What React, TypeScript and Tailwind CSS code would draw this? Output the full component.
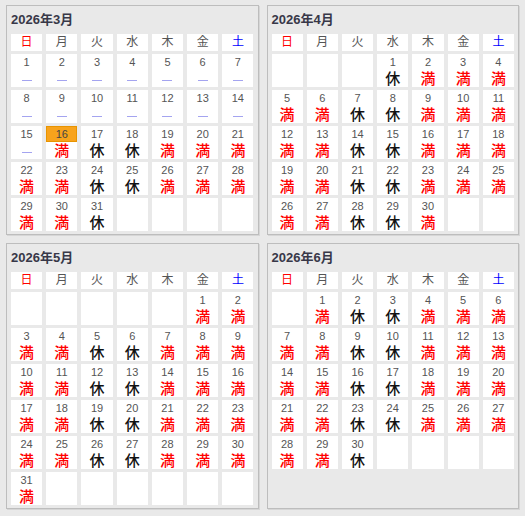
import React from 'react';

const WEEK = ['日', '月', '火', '水', '木', '金', '土'];
const MONTHS = [
  { year: 2026, month: 3 },
  { year: 2026, month: 4 },
  { year: 2026, month: 5 },
  { year: 2026, month: 6 },
];
const TODAY = { month: 3, day: 16 };

type Status = 'past' | 'full' | 'closed';

function getStatus(month: number, day: number, dow: number): Status {
  if (month < TODAY.month || (month === TODAY.month && day < TODAY.day)) return 'past';
  // 火・水は定休日
  if (dow === 2 || dow === 3) return 'closed';
  return 'full';
}

function weekClass(i: number) {
  if (i === 0) return 'text-[#ff0000]';
  if (i === 6) return 'text-[#0000ff]';
  return 'text-[#555555]';
}

function DayCell({ month, day, dow }: { month: number; day: number; dow: number }) {
  const status = getStatus(month, day, dow);
  const isToday = month === TODAY.month && day === TODAY.day;
  return (
    <div className="flex h-[33px] flex-col bg-white text-center">
      <div
        className={
          isToday
            ? 'h-[16px] border border-[#e89400] bg-[#f8a31c] text-[11px] leading-[14px] text-[#444]'
            : 'h-[16px] pt-[1px] text-[11px] leading-[15px] text-[#555]'
        }
      >
        {day}
      </div>
      <div className="flex h-[17px] items-center justify-center">
        {status === 'past' && <span className="mt-[4px] block h-[1px] w-[10px] bg-[#a4a4f0]" />}
        {status === 'full' && <span className="text-[15px] font-medium leading-[17px] text-[#ff0000]">満</span>}
        {status === 'closed' && <span className="text-[15px] font-medium leading-[17px] text-[#111]">休</span>}
      </div>
    </div>
  );
}

function MonthPanel({ year, month }: { year: number; month: number }) {
  const first = new Date(year, month - 1, 1).getDay();
  const days = new Date(year, month, 0).getDate();
  const total = Math.ceil((first + days) / 7) * 7;
  const cells = [];
  for (let i = 0; i < total; i++) {
    const day = i - first + 1;
    if (day < 1 || day > days) {
      cells.push(<div key={i} className="h-[33px] bg-white" />);
    } else {
      cells.push(<DayCell key={i} month={month} day={day} dow={i % 7} />);
    }
  }

  return (
    <div className="border border-[#bdbdbd] bg-[#e9e9e9] px-[4px] pb-[3px] shadow-[1px_1px_0_#d6d6d6]">
      <div className="pt-[5px] pb-[6px] text-[13px] font-bold leading-[17px] text-[#383848]">
        {year}年{month}月
      </div>
      <div className="grid grid-cols-7 gap-x-[4px] gap-y-[3px]">
        {WEEK.map((w, i) => (
          <div key={w} className={`h-[17px] bg-white text-center text-[12px] leading-[17px] ${weekClass(i)}`}>
            {w}
          </div>
        ))}
        {cells}
      </div>
    </div>
  );
}

export default function App() {
  return (
    <div
      className="min-h-[516px] bg-[#e9e9e9] px-[6px] pt-[5px]"
      style={{ fontFamily: '"Liberation Sans", "Noto Sans CJK JP", sans-serif' }}
    >
      <div className="grid grid-cols-2 gap-[8px]">
        {MONTHS.map((m) => (
          <MonthPanel key={m.month} year={m.year} month={m.month} />
        ))}
      </div>
    </div>
  );
}
